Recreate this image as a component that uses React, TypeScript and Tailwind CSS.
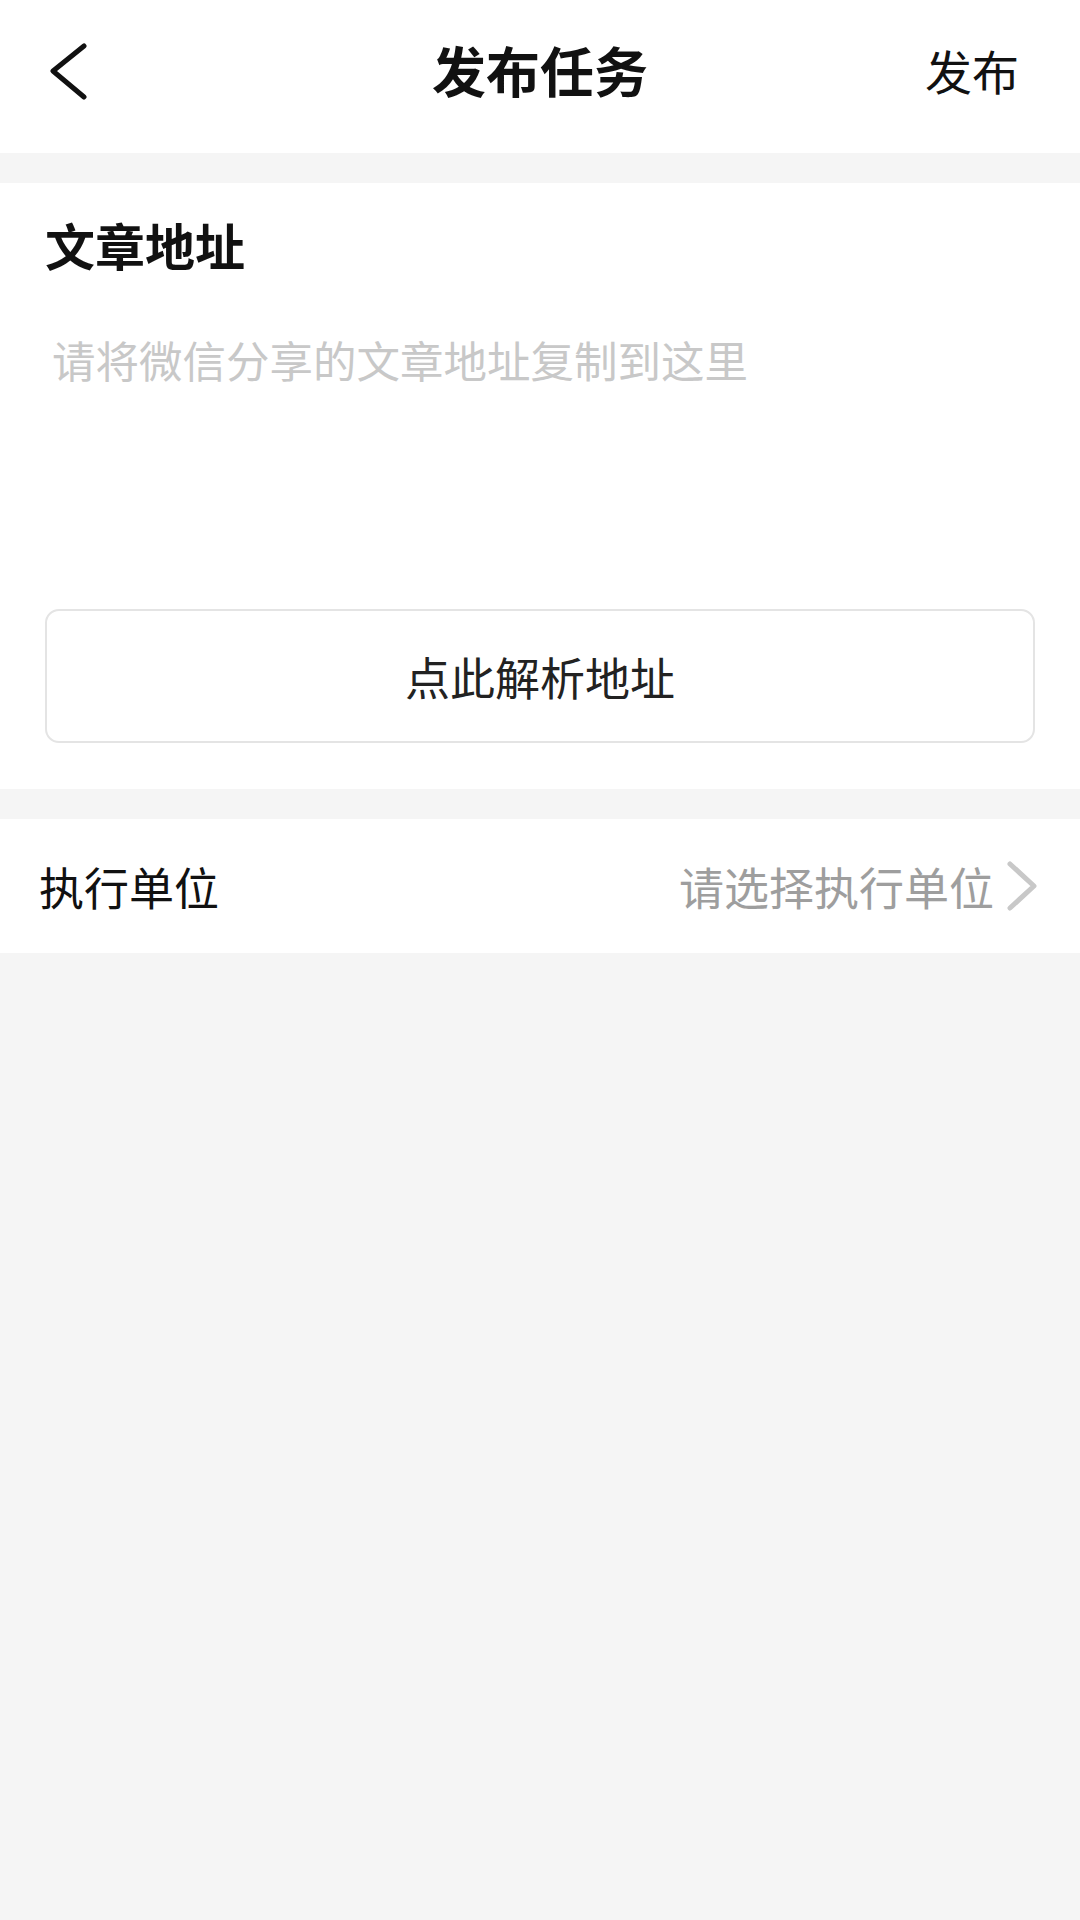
import React from "react";

export default function App() {
  const font = { fontFamily: '"Noto Sans CJK SC", "Noto Sans", sans-serif' };
  return (
    <div className="min-h-[1920px] w-[1080px] bg-[#f5f5f5]" style={font}>
      {/* Header */}
      <div className="flex h-[153px] items-center bg-white pb-[14px]">
        <div className="flex w-[200px] items-center pl-[50px] pt-[4px]">
          <svg width="38" height="60" viewBox="0 0 38 60" fill="none">
            <polyline
              points="34,4 3,29 34,55"
              stroke="#111"
              strokeWidth="5"
              strokeLinecap="round"
              strokeLinejoin="round"
            />
          </svg>
        </div>
        <div className="flex-1 text-center text-[54px] font-semibold leading-[54px] text-[#111]">
          发布任务
        </div>
        <div className="w-[200px] pr-[61px] text-right text-[47px] leading-[47px] text-[#111]">
          发布
        </div>
      </div>

      <div className="h-[30px]" />

      {/* Article address */}
      <div className="bg-white px-[45px] pt-[36px] pb-[46px]">
        <div className="text-[50px] font-bold leading-[50px] text-[#111]">文章地址</div>
        <textarea
          className="mt-[69px] block h-[271px] w-full resize-none border-0 bg-transparent px-[7px] py-0 text-[43.5px] leading-[44px] text-[#333] outline-none placeholder:text-[#c8c8c8]"
          placeholder="请将微信分享的文章地址复制到这里"
        />
        <div className="flex h-[134px] w-full items-center justify-center rounded-[14px] border-2 border-[#e4e4e4] text-[45px] leading-[45px] text-[#222]">
          点此解析地址
        </div>
      </div>

      <div className="h-[30px]" />

      {/* Execution unit row */}
      <div className="flex h-[134px] items-center justify-between bg-white pl-[39px] pr-[42px]">
        <div className="text-[45px] leading-[45px] text-[#111]">执行单位</div>
        <div className="flex items-center">
          <span className="text-[45px] leading-[45px] text-[#9e9e9e]">请选择执行单位</span>
          <svg width="34" height="52" viewBox="0 0 34 52" fill="none" className="ml-[10px]">
            <polyline
              points="6,4 30,26 6,48"
              stroke="#c8c8c8"
              strokeWidth="5"
              strokeLinecap="round"
              strokeLinejoin="round"
            />
          </svg>
        </div>
      </div>
    </div>
  );
}
